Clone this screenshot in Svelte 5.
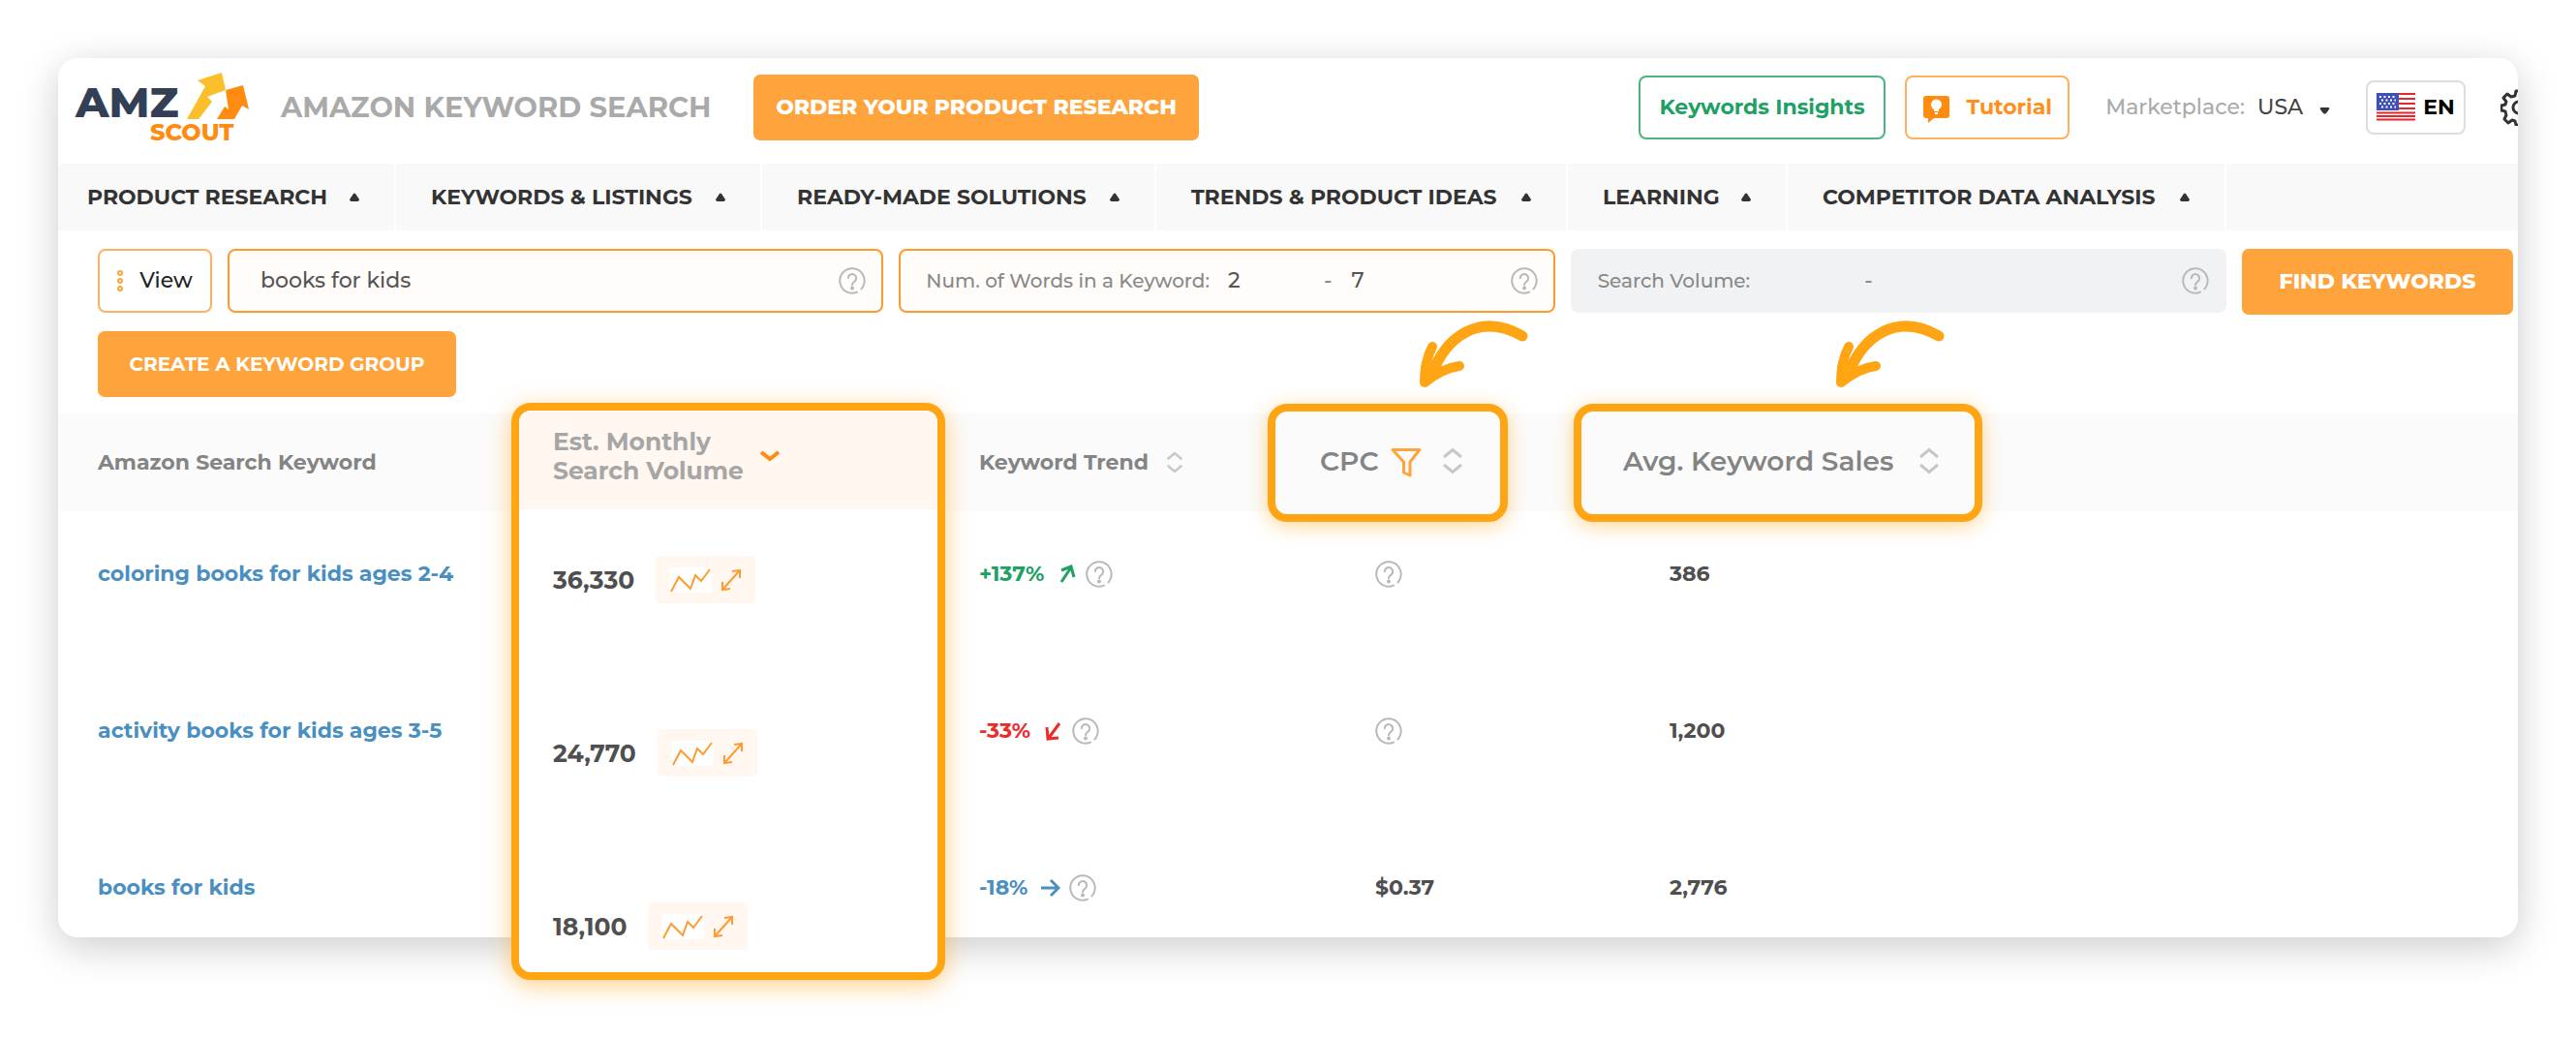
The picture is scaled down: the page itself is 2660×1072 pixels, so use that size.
<script lang="ts">
	type Trend = 'up' | 'down' | 'flat';

	const menu = [
		'PRODUCT RESEARCH',
		'KEYWORDS & LISTINGS',
		'READY-MADE SOLUTIONS',
		'TRENDS & PRODUCT IDEAS',
		'LEARNING',
		'COMPETITOR DATA ANALYSIS'
	];

	const rows: { keyword: string; change: string; trend: Trend; cpc: string; sales: string }[] = [
		{ keyword: 'coloring books for kids ages 2-4', change: '+137%', trend: 'up', cpc: '', sales: '386' },
		{ keyword: 'activity books for kids ages 3-5', change: '-33%', trend: 'down', cpc: '', sales: '1,200' },
		{ keyword: 'books for kids', change: '-18%', trend: 'flat', cpc: '$0.37', sales: '2,776' }
	];

	const volumes = ['36,330', '24,770', '18,100'];

	const trendPaths = {
		up: 'M4 19 14 4M4 7 14 3 17 14',
		down: 'M16 3 5 18M3 7 4 19 15 18',
		flat: 'M0 11H18M10 3 18 11 10 19'
	};

	let search = $state('books for kids');
	let minWords = $state('2');
	let maxWords = $state('7');
	let marketplace = $state('USA');
</script>

{#snippet help()}
	<svg class="help" viewBox="0 0 28 28" aria-hidden="true">
		<path d="M19 25.6A12.7 12.7 0 1 1 25.8 18.5Q25 21 23.4 22.4" />
		<path d="M9.8 11.2a4.2 4.2 0 1 1 6.4 3.6Q14 16.200 14 18.200" />
		<circle cx="14" cy="21.500" r="1" />
	</svg>
{/snippet}

{#snippet sorter()}
	<svg class="sorter" viewBox="0 0 22 28" aria-hidden="true">
		<path d="M2 10 11 2.500 20 10M2 18 11 25.500 20 18" />
	</svg>
{/snippet}

{#snippet pointer()}
	<svg class="pointer" viewBox="0 0 112 68" aria-hidden="true">
		<path class="line" d="M106 14C62-11 27 14 12 55" />
		<path class="barb" d="M13 25Q5 40 5 62Q24 47 41 45" />
		<path class="head" d="M1 44 5 66Q20 57 29 49L20 46 13 42Z" />
	</svg>
{/snippet}

<div class="card">
	<header>
		<a class="logo" href="/" aria-label="AMZScout">
			<svg viewBox="0 0 180 74">
				<text x="0" y="47" class="amz">AMZ</text>
				<text x="77" y="71" class="scout">SCOUT</text>
				<path fill="#fbbf2b" d="M115 49 134 15 126 9 151 1 155 19 136 26 141 31 127 49Z" />
				<path fill="#ff8c10" d="M146 49 154 36 158 39 155 19 173 14 179 39 172 35 164 49Z" />
			</svg>
		</a>
		<h1>AMAZON KEYWORD SEARCH</h1>
		<button type="button" class="solid order">ORDER YOUR PRODUCT RESEARCH</button>

		<div class="tools">
			<button type="button" class="outline green">Keywords Insights</button>
			<button type="button" class="outline tutorial">
				<svg viewBox="0 0 27 28" aria-hidden="true">
					<path fill="#ff8c10" d="M3 0H24Q27 0 27 3V20Q27 23 24 23H11L5 28V23H3Q0 23 0 20V3Q0 0 3 0Z" />
					<circle cx="13.500" cy="9" r="5.500" fill="#fff" />
					<path fill="#fff" d="M11 12H16V16H11ZM12 17H15V19H12Z" />
				</svg>
				Tutorial
			</button>
			<div class="market">
				<label for="marketplace">Marketplace:</label>
				<select id="marketplace" bind:value={marketplace}>
					<option>USA</option>
				</select>
				<svg viewBox="0 0 11 8" aria-hidden="true"><path d="M2 1H9Q11 1 10 3L7 7Q5.500 8 4 7L1 3Q0 1 2 1Z" /></svg>
			</div>
			<button type="button" class="lang">
				<svg viewBox="0 0 40 29" aria-hidden="true">
					<rect width="40" height="29" fill="#fff" />
					<path stroke="#e8252b" stroke-width="2" d="M0 1H40M0 6H40M0 11H40M0 16H40M0 20.500H40M0 24H40M0 27.500H40" />
					<rect width="23" height="18" fill="#3f51b5" />
					<path
						stroke="#fff"
						stroke-width="2"
						stroke-dasharray="2 2.500"
						d="M3 4H21M5 7.500H20M3 11H21M5 14.500H20"
					/>
				</svg>
				EN
			</button>
			<button type="button" class="gear" aria-label="Settings">
				<svg viewBox="0 0 38 38" aria-hidden="true">
					<path
						d="M16 2H22L23 7 27 9 31 6 35 10 32 14 33 17 37 18V22L33 23 31 27 34 31 30 35 26 32 23 33 22 37H16L15 33 12 32 8 35 4 31 6 27 5 23 1 22V17L5 16 6 13 3 9 7 5 11 8 15 7Z"
					/>
					<circle cx="19" cy="19" r="6" />
				</svg>
			</button>
		</div>
	</header>

	<nav>
		{#each menu as item}
			<a href="/">
				{item}
				<svg viewBox="0 0 10 9" aria-hidden="true"><path d="M4 1Q5 0 6 1L10 7Q10 9 8 9H2Q0 9 0 7Z" /></svg>
			</a>
		{/each}
	</nav>

	<form class="filters" onsubmit={(e) => e.preventDefault()}>
		<button type="button" class="outline view">
			<svg viewBox="0 0 6 22" aria-hidden="true">
				<circle cx="3" cy="3" r="2" /><circle cx="3" cy="11" r="2" /><circle cx="3" cy="19" r="2" />
			</svg>
			View
		</button>
		<div class="field active">
			<input class="query" aria-label="Keyword" bind:value={search} />
			{@render help()}
		</div>
		<div class="field active">
			<label for="min-words">Num. of Words in a Keyword:</label>
			<input id="min-words" class="from" bind:value={minWords} />
			<span>-</span>
			<input class="to" aria-label="Maximum words" bind:value={maxWords} />
			{@render help()}
		</div>
		<div class="field">
			<label for="min-volume">Search Volume:</label>
			<input id="min-volume" class="from" />
			<span>-</span>
			<input class="to" aria-label="Maximum search volume" />
			{@render help()}
		</div>
		<button type="submit" class="solid find">FIND KEYWORDS</button>
	</form>

	<div class="actions">
		<button type="button" class="solid group">CREATE A KEYWORD GROUP</button>
	</div>

	<div class="results">
		<table class="keywords">
			<thead>
				<tr>
					<th class="col-keyword">Amazon Search Keyword</th>
					<th class="col-trend"><span class="head-cell">Keyword Trend {@render sorter()}</span></th>
					<th class="col-cpc">
						<div class="callout">
							CPC
							<svg class="funnel" viewBox="0 0 32 31" aria-hidden="true">
								<path d="M2 2.500H30L20 15V29L13.500 26V15Z" />
							</svg>
							{@render sorter()}
							{@render pointer()}
						</div>
					</th>
					<th class="col-sales">
						<div class="callout wide">
							Avg. Keyword Sales
							{@render sorter()}
							{@render pointer()}
						</div>
					</th>
				</tr>
			</thead>
			<tbody>
				{#each rows as row}
					<tr>
						<td class="col-keyword"><a href="/">{row.keyword}</a></td>
						<td class="col-trend">
							<span class="change {row.trend}">
								{row.change}
								<svg class="arrow" viewBox="0 0 20 22" aria-hidden="true"><path d={trendPaths[row.trend]} /></svg>
								{@render help()}
							</span>
						</td>
						<td class="col-cpc">
							{#if row.cpc}{row.cpc}{:else}{@render help()}{/if}
						</td>
						<td class="col-sales">{row.sales}</td>
					</tr>
				{/each}
			</tbody>
		</table>

		<table class="volume">
			<thead>
				<tr>
					<th>
						<span class="head-cell">
							<span>Est. Monthly<br />Search Volume</span>
							<svg viewBox="0 0 22 14" aria-hidden="true"><path d="M2 3 11 10 20 3" /></svg>
						</span>
					</th>
				</tr>
			</thead>
			<tbody>
				{#each volumes as volume}
					<tr>
						<td>
							<span class="volume-cell">
								{volume}
								<button type="button" class="chip" aria-label="Show history">
									<svg class="spark" viewBox="0 0 44 26" aria-hidden="true">
										<path d="M2 25 10 10 22 22 27 8 33 14 42 2" />
									</svg>
									<svg class="expand" viewBox="0 0 22 24" aria-hidden="true">
										<path d="M2 22 20 2M12 3 20 2V10M2 14V22L10 21" />
									</svg>
								</button>
							</span>
						</td>
					</tr>
				{/each}
			</tbody>
		</table>
	</div>
</div>

<style>
	:global(body) {
		background: #fff;
		font-family: Montserrat, Inter, 'Open Sans', sans-serif;
		font-size: 22px;
		font-weight: 500;
		line-height: 28px;
	}

	.card {
		margin: 60px 60px 104px;
		border-radius: 20px;
		background: #fff;
		box-shadow: 0 10px 40px rgba(0, 0, 0, 0.2);
	}

	svg {
		flex: none;
	}

	button,
	input,
	select {
		font: inherit;
		box-sizing: border-box;
	}

	button {
		display: flex;
		align-items: center;
		justify-content: center;
		flex: none;
		padding: 0;
		border: none;
		background: none;
		white-space: nowrap;
		cursor: pointer;
	}

	header {
		display: flex;
		align-items: center;
		height: 109px;
		box-sizing: border-box;
		padding: 0 0 8px 18px;
		overflow: hidden;
		border-radius: 20px 20px 0 0;
	}

	.logo {
		display: flex;
	}

	.logo svg {
		width: 180px;
		height: 74px;
		overflow: visible;
	}

	.amz {
		font-size: 44px;
		font-weight: 800;
		fill: #333f55;
	}

	.scout {
		font-size: 24px;
		font-weight: 800;
		fill: #ff8c10;
	}

	h1 {
		margin: 0 38px 0 32px;
		font-size: 29px;
		line-height: 36px;
		font-weight: 700;
		color: #aaa;
		white-space: nowrap;
		min-width: 450px;
	}

	.solid {
		height: 68px;
		border-radius: 7px;
		background: #ffa33c;
		color: #fff;
		font-weight: 800;
	}

	.order {
		min-width: 460px;
	}

	.outline {
		height: 66px;
		border: 2px solid #ffb060;
		border-radius: 8px;
		font-weight: 700;
	}

	.tools {
		display: flex;
		align-items: center;
		gap: 20px;
		margin: 0 -20px 0 auto;
	}

	.green {
		min-width: 255px;
		border-color: #4cb384;
		color: #1fa065;
	}

	.tutorial {
		min-width: 170px;
		gap: 18px;
		color: #ff9020;
	}

	.tutorial svg {
		width: 27px;
		height: 28px;
		margin-top: 4px;
	}

	.market {
		display: flex;
		align-items: center;
		margin: 0 17px;
		color: #aaa;
	}

	select {
		width: 90px;
		padding: 0 0 0 13px;
		border: none;
		appearance: none;
		background: none;
		color: #444;
	}

	.market svg {
		width: 11px;
		height: 8px;
		margin: 6px 0 0 -13px;
		fill: #333;
		pointer-events: none;
	}

	.lang {
		min-width: 103px;
		height: 56px;
		gap: 8px;
		border: 2px solid #ddd;
		border-radius: 8px;
		color: #000;
		font-weight: 700;
	}

	.lang svg {
		width: 40px;
		height: 29px;
	}

	.gear {
		margin-left: 16px;
	}

	.gear svg {
		width: 38px;
		height: 38px;
		fill: none;
		stroke: #333;
		stroke-width: 3;
		stroke-linejoin: round;
	}

	nav {
		display: grid;
		grid-template-columns: 349fr 378fr 407fr 425fr 227fr 453fr 301fr;
		height: 69px;
		background: #f9f9f9;
	}

	nav a {
		display: flex;
		align-items: center;
		justify-content: space-between;
		padding: 0 36px;
		border-right: 2px solid #fff;
		color: #333;
		font-weight: 700;
		text-decoration: none;
		white-space: nowrap;
	}

	nav a:first-child {
		padding-left: 30px;
	}

	nav svg {
		width: 10px;
		height: 9px;
		fill: #333;
	}

	.filters {
		display: flex;
		gap: 16px;
		padding: 19px 5px 0 41px;
	}

	.view {
		min-width: 118px;
		gap: 17px;
		color: #222;
		font-weight: 500;
	}

	.view svg {
		width: 6px;
		height: 22px;
		fill: none;
		stroke: #ffa33c;
		stroke-width: 2;
	}

	.field {
		display: flex;
		flex: 1;
		align-items: center;
		height: 66px;
		box-sizing: border-box;
		padding: 0 16px 0 26px;
		border: 2px solid #f1f2f4;
		border-radius: 8px;
		background: #f1f2f4;
		color: #888;
		min-width: 0;
	}

	.field.active {
		border-color: #ff9a2e;
		background: #fffcf9;
	}

	.field label {
		font-size: 20px;
		white-space: nowrap;
	}

	.field input {
		min-width: 0;
		border: none;
		background: none;
		color: #555;
		outline: none;
	}

	.query {
		flex: 1;
		padding: 0 0 0 6px;
	}

	.from {
		width: 118px;
		padding: 0 0 0 19px;
	}

	.to {
		flex: 1;
		padding: 0 0 0 20px;
	}

	.find {
		min-width: 280px;
	}

	.actions {
		padding: 17px 41px;
	}

	.group {
		min-width: 370px;
		font-size: 20px;
		font-weight: 700;
	}

	.help {
		display: block;
		width: 28px;
		height: 28px;
		fill: none;
		stroke: #b9b9b9;
		stroke-width: 2;
		stroke-linecap: round;
	}

	.sorter {
		width: 18px;
		height: 23px;
		fill: none;
		stroke: #c8c8c8;
		stroke-width: 3;
	}

	.results {
		position: relative;
	}

	table {
		border-collapse: collapse;
		text-align: left;
	}

	.keywords {
		width: 100%;
		table-layout: fixed;
	}

	th,
	td {
		padding: 0;
		color: #4f4f4f;
		font-weight: 700;
	}

	th {
		color: #848484;
	}

	.keywords thead {
		background: #fbfbfb;
	}

	.keywords th {
		height: 101px;
	}

	.keywords td {
		height: 50px;
		padding: 40px 0 72px;
	}

	.keywords tr:last-child td {
		padding-bottom: 26px;
	}

	.keywords .col-keyword {
		width: 910px;
		padding-left: 41px;
	}

	.keywords .col-trend {
		width: 298px;
	}

	.keywords th.col-cpc {
		width: 316px;
	}

	.keywords td.col-cpc {
		padding-left: 111px;
	}

	.keywords td.col-sales {
		padding-left: 99px;
	}

	td a {
		color: #4a8fbf;
		text-decoration: none;
	}

	.head-cell {
		display: flex;
		align-items: center;
		gap: 18px;
	}

	.callout {
		position: relative;
		display: flex;
		align-items: center;
		width: 248px;
		height: 122px;
		box-sizing: border-box;
		margin: -11px 0;
		padding: 0 38px 4px 46px;
		border: 8px solid #ffa514;
		border-radius: 20px;
		background: #fbfbfb;
		box-shadow: 0 4px 20px rgba(255, 165, 20, 0.45);
		font-size: 28px;
		font-weight: 600;
		white-space: nowrap;
	}

	.callout.wide {
		width: 422px;
		padding-left: 43px;
		padding-right: 36px;
	}

	.callout .sorter {
		width: 22px;
		height: 28px;
		margin-left: auto;
	}

	.funnel {
		width: 32px;
		height: 31px;
		margin: 4px 0 0 12px;
		fill: none;
		stroke: #ffa33c;
		stroke-width: 3;
		stroke-linejoin: round;
	}

	.pointer {
		position: absolute;
		top: -92px;
		right: -29px;
		width: 112px;
		height: 68px;
		fill: none;
		stroke: #ffa514;
		stroke-linecap: round;
		stroke-linejoin: round;
		overflow: visible;
	}

	.wide .pointer {
		right: 31px;
	}

	.pointer .line {
		stroke-width: 11;
	}

	.pointer .barb {
		stroke-width: 10;
	}

	.pointer .head {
		fill: #ffa514;
		stroke: none;
	}

	.change {
		display: flex;
		align-items: center;
	}

	.arrow {
		width: 20px;
		height: 22px;
		margin: 0 9px 0 14px;
		fill: none;
		stroke: currentColor;
		stroke-width: 3;
	}

	.up {
		color: #1fa065;
	}

	.down {
		color: #ee2a2a;
	}

	.flat {
		color: #4a8fbf;
	}

	.volume {
		position: absolute;
		top: -11px;
		left: 468px;
		width: 448px;
		box-sizing: border-box;
		border: 8px solid #ffa514;
		border-collapse: separate;
		border-spacing: 0;
		border-radius: 20px;
		background: #fff;
		box-shadow: 0 6px 24px rgba(255, 165, 20, 0.5);
		font-size: 25px;
		line-height: 30px;
	}

	.volume th {
		height: 102px;
		box-sizing: border-box;
		padding: 0 35px 8px;
		border-radius: 12px 12px 0 0;
		background: #fff7f0;
		color: #a6a6a6;
	}

	.volume .head-cell {
		gap: 16px;
	}

	.volume th svg {
		width: 22px;
		height: 14px;
		fill: none;
		stroke: #ff8c10;
		stroke-width: 4;
	}

	.volume td {
		height: 49px;
		padding: 48px 35px 82px;
	}

	.volume tr:last-child td {
		padding-bottom: 23px;
	}

	.volume-cell {
		display: flex;
		align-items: center;
		gap: 22px;
	}

	.chip {
		gap: 9px;
		width: 103px;
		height: 49px;
		border-radius: 4px;
		background: #fff7f0;
	}

	.chip svg {
		fill: none;
		stroke: #ff9a2e;
		stroke-width: 2;
	}

	.spark {
		width: 44px;
		height: 26px;
		border-radius: 3px;
		background: #fff;
	}

	.expand {
		width: 22px;
		height: 24px;
	}
</style>
